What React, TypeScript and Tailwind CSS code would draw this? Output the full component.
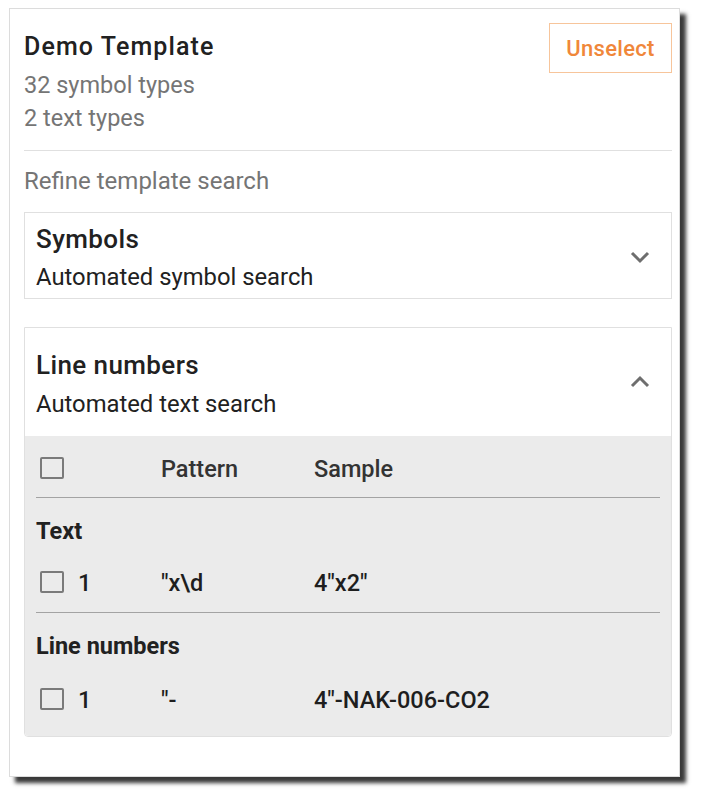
const font = { fontFamily: 'Roboto, "Noto Sans", sans-serif' }

function Box() {
  return <div className="w-[24px] h-[22px] border-2 border-[#7a7a7a] rounded-[2px] shrink-0" />
}

function Chevron({ up = false }: { up?: boolean }) {
  return (
    <svg width="20" height="13" viewBox="0 0 20 13" className="shrink-0">
      <path
        d={up ? 'M2 11 L10 3 L18 11' : 'M2 2 L10 10 L18 2'}
        fill="none"
        stroke="#6e6e6e"
        strokeWidth="3"
      />
    </svg>
  )
}

function Row({ n, pattern, sample }: { n: string; pattern: string; sample: string }) {
  return (
    <div className="flex items-center h-[24px] text-[23.5px] font-medium text-[#1e1e1e]">
      <div className="w-[125px] flex items-center pl-1">
        <Box />
        <span className="ml-[14px] pt-[3px]">{n}</span>
      </div>
      <div className="w-[153px] pt-[3px]">{pattern}</div>
      <div className="pt-[3px]">{sample}</div>
    </div>
  )
}

export default function App() {
  return (
    <div className="w-[701px] h-[794px] bg-white pt-2 pl-[9px]" style={font}>
      <div className="w-[671px] h-[769px] bg-white border border-[#dcdcdc] shadow-[6px_6px_4px_rgba(0,0,0,0.78)] pl-[14px] pr-[7px]">
        {/* header */}
        <div className="flex justify-between pt-[14px]">
          <div className="pt-2">
            <div className="text-[25px] leading-[32px] font-medium tracking-[1.1px] text-[#212121]">Demo Template</div>
            <div className="mt-[6px] text-[23.5px] leading-[33px] text-[#757575]">32 symbol types</div>
            <div className="text-[23.5px] leading-[33px] text-[#757575]">2 text types</div>
          </div>
          <button className="w-[123px] h-[50px] border border-[#f7c59b] text-[#f0873a] text-[22px] font-medium tracking-[0.3px]">
            Unselect
          </button>
        </div>
        <div className="mt-[15px] border-t border-[#e0e0e0]" />
        <div className="mt-[14px] text-[24px] leading-[32px] text-[#757575]">Refine template search</div>

        {/* Symbols */}
        <div className="mt-[15px] border border-[#e0e0e0] pl-[11px] pr-[21px] pt-[11px] pb-[6px] flex items-center justify-between">
          <div>
            <div className="text-[26px] leading-[30px] font-medium tracking-[0.4px] text-[#212121]">Symbols</div>
            <div className="mt-2 text-[23.8px] leading-[30px] text-[#212121]">Automated symbol search</div>
          </div>
          <div className="-mt-[2px]">
            <Chevron />
          </div>
        </div>

        {/* Line numbers */}
        <div className="mt-[28px] border border-[#e0e0e0] rounded-b">
          <div className="pl-[11px] pr-[21px] pt-[22px] pb-[17px] flex items-start justify-between">
            <div>
              <div className="text-[26px] leading-[30px] font-medium tracking-[0.4px] text-[#212121]">Line numbers</div>
              <div className="mt-[9px] text-[23.8px] leading-[30px] text-[#212121]">Automated text search</div>
            </div>
            <div className="mt-[25px]">
              <Chevron up />
            </div>
          </div>
          <div className="bg-[#ebebeb] px-[11px] pb-[25px] rounded-b">
            <div className="pt-[20px] pb-[17px] border-b border-[#a3a3a3]">
              <div className="flex items-center h-[24px] text-[23.5px] font-medium text-[#333333]">
                <div className="w-[125px] pl-1">
                  <Box />
                </div>
                <div className="w-[153px] pt-[3px]">Pattern</div>
                <div className="pt-[3px]">Sample</div>
              </div>
            </div>
            <div className="mt-[19px] text-[23.5px] leading-[28px] font-bold text-[#212121]">Text</div>
            <div className="mt-[25px] pb-[18px] border-b border-[#a3a3a3]">
              <Row n="1" pattern={'"x\\d'} sample={'4"x2"'} />
            </div>
            <div className="mt-[19px] text-[23.5px] leading-[28px] font-bold text-[#212121]">Line numbers</div>
            <div className="mt-[27px]">
              <Row n="1" pattern={'"-'} sample={'4"-NAK-006-CO2'} />
            </div>
          </div>
        </div>
      </div>
    </div>
  )
}
